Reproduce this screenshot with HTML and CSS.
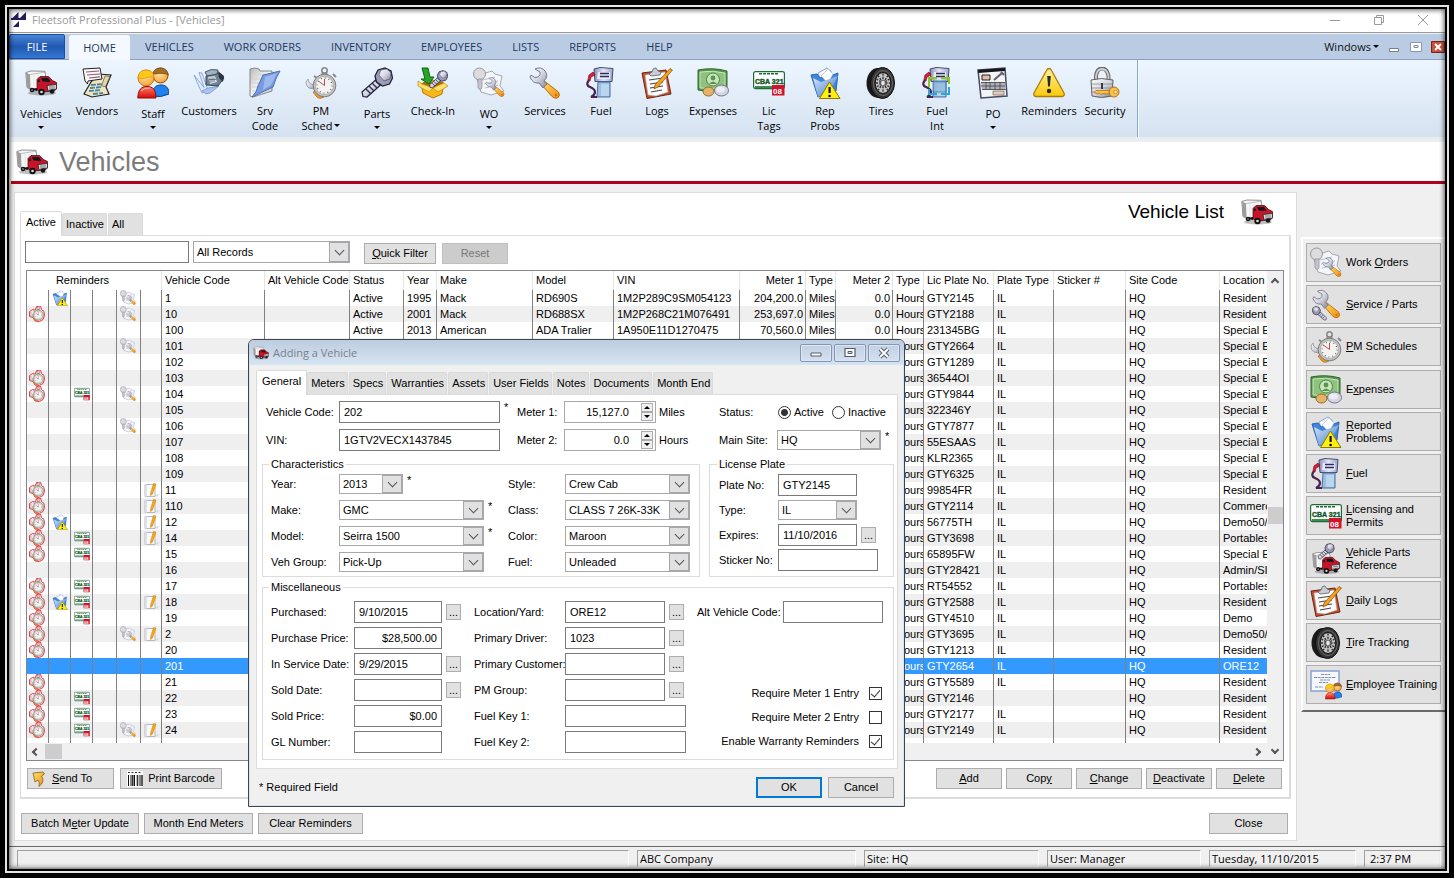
FILE: index.html
```html
<!DOCTYPE html>
<html lang="en">
<head>
<meta charset="utf-8">
<title>Fleetsoft Professional Plus - [Vehicles]</title>
<link rel="stylesheet" href="styles.css">
</head>
<body>
<svg class="sprite" aria-hidden="true">
  <defs>
    <linearGradient id="gSteel" x1="0" y1="0" x2="1" y2="1"><stop offset="0" stop-color="#fff"/><stop offset=".5" stop-color="#d5d7e2"/><stop offset="1" stop-color="#80839a"/></linearGradient>
    <linearGradient id="gGold" x1="0" y1="0" x2="1" y2="1"><stop offset="0" stop-color="#ffe066"/><stop offset="1" stop-color="#f08a10"/></linearGradient>
    <linearGradient id="gBlue" x1="0" y1="0" x2="1" y2="1"><stop offset="0" stop-color="#d8e8fb"/><stop offset="1" stop-color="#3a78c8"/></linearGradient>
    <linearGradient id="gRed" x1="0" y1="0" x2="0" y2="1"><stop offset="0" stop-color="#ff7a60"/><stop offset="1" stop-color="#d40d0d"/></linearGradient>
    <linearGradient id="gPump" x1="0" y1="0" x2="1" y2="0"><stop offset="0" stop-color="#8b93b8"/><stop offset=".5" stop-color="#e2e6f3"/><stop offset="1" stop-color="#9da6c8"/></linearGradient>
    <linearGradient id="gBox" x1="0" y1="0" x2="1" y2="1"><stop offset="0" stop-color="#fff"/><stop offset="1" stop-color="#bdbdbd"/></linearGradient>
    <linearGradient id="gDoc" x1="0" y1="0" x2="1" y2="1"><stop offset="0" stop-color="#b9b9b9"/><stop offset=".5" stop-color="#f4f4f4"/><stop offset="1" stop-color="#c9c9c9"/></linearGradient>
    <radialGradient id="gFace" cx=".4" cy=".3" r=".8"><stop offset="0" stop-color="#ffe9b0"/><stop offset="1" stop-color="#f59a2a"/></radialGradient>
    <linearGradient id="gSign" x1="0" y1="0" x2="0" y2="1"><stop offset="0" stop-color="#fff39a"/><stop offset="1" stop-color="#fbc80c"/></linearGradient>
  </defs>
  <symbol id="truck" viewBox="0 0 32 32">
    <ellipse cx="17" cy="26" rx="14" ry="2.500" fill="#000" opacity=".25"/>
    <path d="M.8 5.500 6 4l14 .3.500 3V20L9 24 2 20.500z" fill="#f6f6f6" stroke="#666" stroke-width=".7"/>
    <path d="M1 5.500 5 7.500 5.500 22.500 2 20.500z" fill="#9c9c9c"/><path d="M5 7.500 20 5.200" stroke="#999" stroke-width=".6"/><path d="M9 8v14M13 7.500v5M17 7v3" stroke="#dedede" stroke-width=".6"/>
    <path d="M12 12.500 15 9.500h8.500l4 4 4 2v6l-1.500 2L18 25l-6-2z" fill="#c81428" stroke="#3a0008" stroke-width=".7"/>
    <path d="M16 11h7l2.500 4-8-.5z" fill="#15151c"/><path d="m12.800 13.500 1.500-2 .9 3.500h-2.500z" fill="#222"/>
    <path d="M22 18.500 31.500 17.500v4.500L23 24z" fill="#d9d9dd" stroke="#222" stroke-width=".8"/><path d="M24 20h6M24 22h6" stroke="#555" stroke-width=".7"/>
    <path d="M5 22 12 21v3z" fill="#111"/>
    <circle cx="7" cy="23" r="2.300" fill="#111"/><circle cx="16.500" cy="25" r="3.200" fill="#111"/><circle cx="16.500" cy="25" r="1.300" fill="#ddd"/><circle cx="27" cy="24.500" r="2.300" fill="#161616"/><circle cx="7" cy="23" r=".8" fill="#bbb"/>
  </symbol>
  <symbol id="vendors" viewBox="0 0 32 32">
    <path d="m17 7 13 1-5 12 3 7-17 3-8-3 7-12z" fill="#efe3c0" stroke="#222" stroke-width="1.200"/>
    <path d="m24 9 5 .5-4.500 10-4-.5z" fill="#e7d7a6" stroke="#444" stroke-width=".6"/>
    <path d="m2 2 17-1 2 11-14 2-.5 3L4 14z" fill="#fbf7f3" stroke="#222"/>
    <path d="m5 5 13-1M6 8l13-1M8 11l11-1.200" stroke="#8a5a85" stroke-width="1.200"/>
    <path d="m10 18 12-1M9 21l12-1M8 24l12-1M12 27l10-1" stroke="#4a88a0" stroke-width="1.800" stroke-dasharray="5 1"/>
  </symbol>
  <symbol id="staff" viewBox="0 0 32 32">
    <path d="M15 29c0-7 3-11 9-11s8 4 8 9q-8 4-17 2z" fill="#1f82ee" stroke="#0a3f9c"/>
    <circle cx="23.500" cy="8.500" r="7.500" fill="url(#gFace)" stroke="#7a4a08"/><path d="M15.500 7Q17 1 23.500 1t8 7q-4-2-8.500-1.500T15.500 7z" fill="#a36d22" stroke="#6e450f" stroke-width=".6"/>
    <circle cx="9" cy="11" r="8" fill="url(#gFace)" stroke="#c87808"/><path d="M1 10.500Q2 3 9 3t8 7q-4-1-8 1t-8-.5z" fill="#ffc918" stroke="#d98c00" stroke-width=".6"/>
    <path d="M.800 31C1 23 4 19.500 10 19.500S19 23 19 31z" fill="url(#gRed)" stroke="#980808"/><path d="M4 24q3-3.500 9-3" stroke="#ffb8a8" fill="none"/>
  </symbol>
  <symbol id="customers" viewBox="0 0 32 32">
    <path d="M1 8q4 10 8 18l6-3L9 6l-3-.500 5 15z" fill="#dbe9ff" stroke="#7c9ad0" stroke-width=".8"/>
    <path d="m9 24 6-3 11-2-9 7-4 1z" fill="#a9c4ee" stroke="#6e8fc8" stroke-width=".7"/>
    <path d="m13 9 13-3 5 5-6 8-12-1z" fill="#6e8294" stroke="#232f3c" stroke-width=".8"/>
    <path d="M12 5q6-4 13-2l-1 4-10 2z" fill="#9fb0bf" stroke="#33404d" stroke-width=".8"/>
    <path d="m25 4 6 5-1 6-4-4z" fill="#2b3440"/><path d="m15 10 7-1 2 6-7 2z" fill="#d8e0e8"/><path d="M17 11v5M19 10.500v5M21 10.500v4.500M16 12.500h7" stroke="#4a5866" stroke-width=".7"/>
  </symbol>
  <symbol id="folder" viewBox="0 0 32 32">
    <path d="M1 2q5-2 9 0l1 2h12v20L4 30 1 29z" fill="url(#gDoc)" stroke="#888"/>
    <path d="M3 8h19M3 12h17M3 16h14M3 20h10M3 24h6" stroke="#d4d4d4" stroke-width="1.200"/>
    <path d="M14 8q9-2 17-4-4 6-7 16L3 30q5-5 6-11z" fill="#6f95e0" stroke="#3c63b8" opacity=".92"/><path d="m16 10 12-4-6 12-8 5z" fill="#b7cdf7" opacity=".6"/>
  </symbol>
  <symbol id="watch" viewBox="0 0 32 32">
    <path d="M3 12q0 4 3 5l6 1v4q-5 0-8-1-3-2-3-6z" fill="url(#gSteel)" stroke="#858585" stroke-width=".7"/><path d="m8 25 6-2 5 7q-5 3-8-1z" fill="#e89b2c" stroke="#a96608" stroke-width=".7"/>
    <circle cx="19.500" cy="3.500" r="2.700" fill="none" stroke="#8a8a8a" stroke-width="1.600"/><path d="M17 6h5v3h-5z" fill="#aaa" stroke="#666" stroke-width=".6"/><path d="m9 9 3 2M28 7l3 3" stroke="#888" stroke-width="2"/>
    <circle cx="19.500" cy="18.500" r="11.300" fill="#c3c3c3" stroke="#7b7b7b"/><circle cx="19.500" cy="18.500" r="9" fill="#f3f3f1" stroke="#9a9a9a" stroke-width=".6"/>
    <circle cx="19.500" cy="18.500" r="7.500" fill="none" stroke="#444" stroke-width="1.100" stroke-dasharray=".9 3.030"/><path d="M19.500 18.500V12m0 6.500L14 14.500" stroke="#c03a3a" stroke-width=".9"/>
  </symbol>
  <symbol id="bolt" viewBox="0 0 32 32">
    <path d="m18 10 5 5L6 30l-4-.5L1 25z" fill="url(#gSteel)" stroke="#24203c" stroke-width="1.200"/>
    <path d="m14 13 5 5M11 16l5 5M8 19l5 5M5 22l5 5" stroke="#33304f" stroke-width="1.400"/>
    <path d="m14 9 3-6 7-2 6 3 1.500 7-3 6-7 2-6-4z" fill="#9a9cb8" stroke="#24203c" stroke-width="1.300"/><path d="m18 8 2-5 6-1 4 4-1 6-6 2z" fill="url(#gSteel)" stroke="#4a4768" stroke-width=".6"/>
  </symbol>
  <symbol id="checkin" viewBox="0 0 32 32">
    <path d="m4 17 11-4 12 3-2 11-9 4-10-5z" fill="#f7b818" stroke="#b87808"/><path d="m4 17 12 4 11-5-6-3-6 2-5-2z" fill="#a86a06"/>
    <path d="m1 14 4 3 11 4-4 4-11-6zM27 16l4 3-10 6-5-4z" fill="#ffe06c" stroke="#c58a0a" stroke-width=".7"/>
    <path d="M5 1h6l2 9h4l-5 7-8-5h4z" fill="#28a428" stroke="#0d6a12"/>
    <use href="#bolt" x="12" y="3" width="19" height="19"/>
  </symbol>
  <symbol id="wrench" viewBox="0 0 32 32">
    <path d="M16 14.500 29.500 25q2.500 4-1 6-3.500 1-6-2L12 17z" fill="url(#gGold)" stroke="#c06c08"/>
    <path d="M6 2q6-3 10 2t-1 10q1 2 3 3l-4 4-4-5q-6 1-9-6l1-2q4 4 7 2t2-5z" fill="url(#gSteel)" stroke="#77798c"/><circle cx="27" cy="28" r="1.200" fill="#c27510"/>
  </symbol>
  <symbol id="wo" viewBox="0 0 32 32">
    <path d="M3 9 19 4l3 3 7 2-2 10 4 5-13 4-10-3z" fill="#f5f6fa" stroke="#a4a7b4"/><path d="m10 13 12-3M11 17l14-3M12 21l13-3" stroke="#b9bdd0"/>
    <circle cx="6.500" cy="7" r="6" fill="#dbdbe0" stroke="#999"/><path d="M5 12v9q2 3 4 0v-9z" fill="#c5c5cb" stroke="#8e8e98" stroke-width=".7"/>
    <use href="#wrench" x="12" y="10" width="20" height="20"/>
  </symbol>
  <symbol id="fuel" viewBox="0 0 32 32">
    <path d="m9 2 6-1.500 13 1-1 13H10z" fill="url(#gPump)" stroke="#454a78"/><path d="M13 5h12v7H12z" fill="#e6e9f6"/><path d="M15 6.500h9M15 9.500h9" stroke="#2e2d63" stroke-width="1.600"/>
    <path d="M13 15h12v15H12z" fill="#9cbfe0" stroke="#4b6da2"/><path d="M16 17h8v12h-8z" fill="#b8d6ee"/>
    <path d="M4 13q-4 5 1 7t5 5-4 5h6" fill="none" stroke="#4a2450" stroke-width="2.200"/><path d="M3 13 4 8l4-3 2 3-4 2-1 4z" fill="#d8203a" stroke="#7a0c1c" stroke-width=".7"/>
  </symbol>
  <symbol id="logs" viewBox="0 0 32 32">
    <path d="m1 6 24-3 5 24L6 31.500z" fill="#c4512c" stroke="#6e2410"/><path d="m4 8 20-3 3 20-12 4-8-1z" fill="#fbfbfb" stroke="#aaa" stroke-width=".6"/>
    <path d="m8 13 14-2M9 17l13-2M9 21l13-2M10 25l11-2" stroke="#484848" stroke-width="1.100"/><path d="m8 7 3-2q1-5 4-4l2 3 3 1-1 3-9 1z" fill="#c9ccd4" stroke="#60626c" stroke-width=".8"/>
    <path d="M29 1.500 31.500 3 17 20l-4 2 1-4z" fill="#f5a21c" stroke="#8a4c08" stroke-width=".7"/>
  </symbol>
  <symbol id="money" viewBox="0 0 32 32">
    <path d="M1 3q15-3 29 1v18q-15 4-29 1z" fill="#55964a" stroke="#2f6a2c"/><path d="M3 5q13-2 25 1v14q-13 3-25 1z" fill="#8fc27f" stroke="#dff0d4" stroke-width=".8"/>
    <circle cx="16" cy="12.500" r="6.500" fill="#c8e4bb" stroke="#4c8a42"/><circle cx="16" cy="11" r="2.400" fill="#5a964e"/><path d="M12 17q4-5 8 0z" fill="#5a964e"/>
    <ellipse cx="11.500" cy="24.500" rx="5.500" ry="4.500" fill="#e5b368" stroke="#94692a"/><ellipse cx="24.500" cy="23.500" rx="7" ry="5.500" fill="#d4d4e2" stroke="#77778e"/><ellipse cx="23.500" cy="22.500" rx="4.500" ry="3" fill="#ececf4"/>
  </symbol>
  <symbol id="plate" viewBox="0 0 32 32">
    <rect x=".6" y="4.600" width="30.800" height="17" rx="2" fill="#fff" stroke="#1d6a34" stroke-width="1.200"/><path d="M6 6.800h20" stroke="#1d6a34" stroke-width="1.400" stroke-dasharray="3 1"/><path d="M2 20h17" stroke="#3c8a52" stroke-width="2"/>
    <text x="2" y="16.500" font-family="Liberation Sans, sans-serif" font-weight="bold" font-size="7" fill="#14572a" stroke="#14572a" stroke-width=".4">CBA 321</text>
    <rect x="19" y="18" width="12.500" height="10.500" fill="#d0142c"/><text x="20" y="27" font-family="Liberation Sans, sans-serif" font-weight="bold" font-size="8" fill="#fff">08</text>
  </symbol>
  <symbol id="sign" viewBox="0 0 32 32">
    <path d="M16 1.500q1.500 0 2.500 2L31 26q1 3-2 3.500H3q-3-.5-2-3.500L13.500 3.500q1-2 2.500-2z" fill="url(#gSign)" stroke="#b07a06" stroke-width="1.300"/>
    <path d="M14.200 9h3.600l-.9 10.500h-1.800z" fill="#2a2a2a"/><circle cx="16" cy="24" r="2.200" fill="#2a2a2a"/>
  </symbol>
  <symbol id="problem" viewBox="0 0 32 32">
    <path d="m9 6 9-5 4 3 3 12-10 6z" fill="#f6faff" stroke="#8fa8cc"/><path d="M2 8l6-1 3 4 13-3 5-2-2 18-18 6z" fill="#3f87dc" stroke="#2a62b4"/><path d="m12 9 7-7 5 5-5 9z" fill="#fff" stroke="#a8bcd8" stroke-width=".6"/><path d="m4 11 8 4 17-6-9 17-11 4z" fill="url(#gBlue)"/>
    <path d="M20.500 15 31 31.500H10.500z" fill="#ffee10" stroke="#8a7a00"/><path d="M20.600 20v6" stroke="#111" stroke-width="2.200"/><circle cx="20.600" cy="29" r="1.300"/>
  </symbol>
  <symbol id="tire" viewBox="0 0 32 32">
    <ellipse cx="13" cy="16" rx="11.500" ry="15" fill="#191919"/><ellipse cx="17.500" cy="16" rx="12" ry="15.500" fill="#353535" stroke="#0d0d0d"/><ellipse cx="18" cy="16" rx="9.500" ry="12.500" fill="none" stroke="#777" stroke-width=".8"/>
    <ellipse cx="18" cy="16" rx="7.800" ry="10.500" fill="#c4c4c4" stroke="#111"/><path d="m18 6.500 0 19M11 16h14M13 8.500l10 15M23 8.500l-10 15M11.500 12l13 8M24.500 12l-13 8" stroke="#2b2b2b" stroke-width="1.400" stroke-dasharray="2 1.200"/><ellipse cx="18" cy="16" rx="2.400" ry="3" fill="#e5e5e5" stroke="#555"/>
  </symbol>
  <symbol id="fuelint" viewBox="0 0 32 32">
    <use href="#fuel" width="32" height="32"/><path d="M12 14h13v11H12z" fill="#8fb8d8" opacity=".7" stroke="#286ca8"/><path d="M8 20v-9h8M20 11h8v6" fill="none" stroke="#8ac81e" stroke-width="2"/><path d="M28 20v7h-8M16 27H8v-5" fill="none" stroke="#29a8d8" stroke-width="2"/>
  </symbol>
  <symbol id="po" viewBox="0 0 32 32">
    <path d="m1 3 27-2 2 28-26 2z" fill="#f4f4f7" stroke="#444a60" stroke-width="1.500"/><path d="m1 3 27-2v3L1 6z" fill="#15161e"/>
    <path d="M5 8h8v5H5z" fill="#e8bda8" stroke="#222"/><path d="m17 13 8-7M24 5l3 3" stroke="#5f6278" stroke-width="2.200"/><path d="M4 15h24v8H5z" fill="#adb0ba"/><path d="M4 15.500h24M4 19h24M5 22.500h24M9 15v8M13 15v8M18 15v8M23 15v8" stroke="#444" stroke-width=".8"/><path d="M16 24h11v4H16z" fill="#eac8b4" stroke="#555" stroke-width=".6"/>
  </symbol>
  <symbol id="lock" viewBox="0 0 32 32">
    <path d="M7 15V9q1-7.500 6-7.500T19.500 9v6" fill="none" stroke="#6c6c6c" stroke-width="4"/><path d="M7 15V9q1-7 6-7t6.500 7v6" fill="none" stroke="#cfcfcf" stroke-width="1.800"/>
    <path d="M2 13q10-3 22 0l-1 16q-11 3-20 0z" fill="url(#gSteel)" stroke="#5f5f5f"/><path d="M3 17h20M3 21h20M3 25h20" stroke="#8c8c8c" stroke-width=".8"/><path d="M13 16v6" stroke="#3b3b3b" stroke-width="2"/>
    <circle cx="25" cy="25" r="5" fill="#f8c14a" stroke="#b9700e"/><circle cx="26.500" cy="25" r="1.700" fill="#fff2cc" stroke="#b9700e" stroke-width=".7"/><path d="M20 23.500H7l-2 2 3 1.500 2-1 2 1.500 2-1 6 .5z" fill="#f8c14a" stroke="#b9700e" stroke-width=".8"/>
  </symbol>
  <symbol id="service" viewBox="0 0 32 32"><use href="#wrench" x="2" y="0" width="29" height="30"/><use href="#bolt" x="2" y="17" width="15" height="15" transform="matrix(-1 0 0 1 19 0)"/></symbol>
  <symbol id="vehparts" viewBox="0 0 32 32"><use href="#truck" y="6" width="32" height="28"/><use href="#bolt" x="5" y="0" width="22" height="17"/></symbol>
  <symbol id="training" viewBox="0 0 32 32">
    <rect x="1" y="2" width="28" height="20" fill="#f5f8ff" stroke="#8fa6d4" stroke-width="1.600"/><path d="M11 5.500h9M4 8.500h22M10 11h10M9 13.500h9M5 18h8" stroke="#7c8498" stroke-width=".9" stroke-dasharray="3 .6"/>
    <use href="#staff" x="15" y="13" width="17" height="18"/>
  </symbol>
  <symbol id="due" viewBox="0 0 32 32"><path d="m15 1 8-1 2 7 5 4 1 8-3 8-7 4-9-1-4-7-7-2V11l6-4 6 1z" fill="#f5e2e2" stroke="#f03a3a" stroke-width="2"/><use href="#watch" x="1" y="1" width="29" height="30"/></symbol>
  <symbol id="note" viewBox="0 0 32 32"><path d="m20 26 12-2-6 6z" fill="#ddd"/><path d="M2 5h20v24H2z" fill="#fafafc" stroke="#9ea4b8" stroke-width="1.500"/><path d="M2 5h4v24H2z" fill="#dcdfea"/><path d="m19 3 5 1-7 20-4 3v-5z" fill="#f6a818" stroke="#c87c08"/></symbol>
  <symbol id="send" viewBox="0 0 16 16"><path d="m1 2 10-1 1.500 2L9.500 5q4 5.500-2.500 10.500Q8 11 6 9l-3 2z" fill="url(#gGold)" stroke="#705010" stroke-width=".7"/></symbol>
  <symbol id="barcode" viewBox="0 0 16 16"><path d="M0 0h16v16H0z" fill="#fff"/><path d="M1 1.500h14" stroke="#333" stroke-dasharray="2 1.500"/><path d="M1.500 4v11M4 4v11M7.500 4v11M13 4v11" stroke="#111"/><path d="M5.800 4v11M10.500 4v11M15 4v11" stroke="#333" stroke-width="1.600"/></symbol>
</svg>

<div class="window">
  <header class="titlebar">
    <svg class="logo" viewBox="0 0 16 16"><path d="M7.500 0v6H1.500zM15 0v6H9z" fill="#251a5c"/><path d="M0 6h15v2H0zM8 9v6H2z" fill="#251a5c"/></svg>
    <span class="app-title">Fleetsoft Professional Plus - [Vehicles]</span>
    <button class="win-btn" aria-label="Minimize"><svg viewBox="0 0 12 12"><path d="M1 6.500h10"/></svg></button>
    <button class="win-btn" aria-label="Restore"><svg viewBox="0 0 12 12"><path d="M1.500 3.500h7v7h-7zM3.500 3V1.500h7v7H9"/></svg></button>
    <button class="win-btn" aria-label="Close"><svg viewBox="0 0 12 12"><path d="m1 1 10 10M11 1 1 11"/></svg></button>
  </header>

  <nav class="menu">
    <button class="file">FILE</button>
    <button class="tab-home">HOME</button>
    <button>VEHICLES</button><button>WORK ORDERS</button><button>INVENTORY</button><button>EMPLOYEES</button><button>LISTS</button><button>REPORTS</button><button>HELP</button>
    <div class="mdi">
      <button class="windows">Windows<i class="arrow"></i></button>
      <button class="mdi-btn" aria-label="Minimize child"><svg viewBox="0 0 14 14"><path d="M2.500 8.500h9v3h-9z" fill="#fff" stroke="#777f8c"/></svg></button>
      <button class="mdi-btn" aria-label="Restore child"><svg viewBox="0 0 14 14"><path d="M1.500 2.500h11v9h-11z" fill="#fff" stroke="#8b98aa"/><path d="M5 5.500h4v2H5z" fill="#fff" stroke="#7f8da5"/></svg></button>
      <button class="mdi-btn" aria-label="Close child"><svg viewBox="0 0 14 14"><path d="M.500 1.500h13v11H.500z" fill="#c8503c" stroke="#7a2216"/><path d="m4 4 6 6m0-6-6 6" stroke="#fff" stroke-width="2"/></svg></button>
    </div>
  </nav>

  <div class="ribbon"><div class="ribbon-group" id="ribbon"></div></div>

  <div class="page-head"><svg><use href="#truck"/></svg><h1>Vehicles</h1></div>

  <main class="workspace">
    <section class="panel">
      <div class="panel-head">
        <div class="tabs">
          <button class="active">Active</button><button>Inactive</button><button class="all">All</button>
        </div>
        <h2>Vehicle List <svg><use href="#truck"/></svg></h2>
      </div>
      <div class="list">
        <div class="filters">
          <input class="box search" type="text" aria-label="Search">
          <span class="combo filter"><select aria-label="Filter"><option>All Records</option></select></span>
          <button class="btn quick"><span><u>Q</u>uick Filter</span></button>
          <button class="btn reset" disabled>Reset</button>
        </div>
        <div class="grid">
          <div class="grid-view">
            <table>
              <colgroup><col class="w22"><col class="w22"><col class="w22"><col class="w24"><col class="w24"><col class="w21"><col class="w103"><col class="w85"><col class="w54"><col class="w33"><col class="w96"><col class="w81"><col class="w126"><col class="w66"><col class="w30"><col class="w57"><col class="w31"><col class="w70"><col class="w60"><col class="w72"><col class="w94"><col></colgroup>
              <thead><tr><th colspan="5" class="center">Reminders</th><th></th><th>Vehicle Code</th><th>Alt Vehicle Code</th><th>Status</th><th>Year</th><th>Make</th><th>Model</th><th>VIN</th><th class="num">Meter 1</th><th>Type</th><th class="num">Meter 2</th><th>Type</th><th>Lic Plate No.</th><th>Plate Type</th><th>Sticker #</th><th>Site Code</th><th>Location</th></tr></thead>
              <tbody id="rows"></tbody>
            </table>
            <div class="hscroll"><i class="chev left"></i><i class="thumb"></i><i class="chev right"></i></div>
          </div>
          <div class="vscroll"><i class="chev up"></i><i class="thumb"></i><i class="chev down"></i></div>
        </div>
        <div class="actions">
          <button class="btn send"><svg><use href="#send"/></svg><span><u>S</u>end To</span></button>
          <button class="btn print"><svg><use href="#barcode"/></svg>Print Barcode</button>
          <span class="spring"></span>
          <button class="btn act"><span><u>A</u>dd</span></button>
          <button class="btn act"><span>Cop<u>y</u></span></button>
          <button class="btn act"><span><u>C</u>hange</span></button>
          <button class="btn act"><span><u>D</u>eactivate</span></button>
          <button class="btn act"><span><u>D</u>elete</span></button>
        </div>
      </div>
      <div class="panel-foot">
        <button class="btn batch"><span>Batch M<u>e</u>ter Update</span></button>
        <button class="btn month">Month End Meters</button>
        <button class="btn clear">Clear Reminders</button>
        <span class="spring"></span>
        <button class="btn close">Close</button>
      </div>
    </section>
    <aside class="side" id="side"></aside>
  </main>

  <footer class="status">
    <span class="s-main"></span><span class="s-company">ABC Company</span><span class="s-site">Site: HQ</span><span class="s-user">User: Manager</span><span class="s-date">Tuesday, 11/10/2015</span><span class="s-time">2:37 PM</span>
  </footer>
</div>

<div class="dialog" role="dialog" aria-labelledby="dlg-title">
  <div class="dlg-title">
    <svg class="dlg-icon"><use href="#truck"/></svg><span id="dlg-title">Adding a Vehicle</span>
    <button aria-label="Minimize dialog"><svg viewBox="0 0 16 12"><path d="M3 6h10v3H3z" fill="#fff" stroke="#555b6c"/></svg></button>
    <button aria-label="Maximize dialog"><svg viewBox="0 0 16 12"><path d="M3 1.500h10v8H3z" fill="#fff" stroke="#555b6c" stroke-width="1.200"/><path d="M6 4.500h4v2H6z" fill="#cbd8ea" stroke="#555b6c"/></svg></button>
    <button aria-label="Close dialog"><svg viewBox="0 0 16 12"><path d="m4 2 8 8m0-8-8 8" stroke="#555b6c" stroke-width="4"/><path d="m4 2 8 8m0-8-8 8" stroke="#fff" stroke-width="2"/></svg></button>
  </div>
  <form class="dlg-body">
    <div class="tabs dlg-tabs">
      <button type="button" class="active">General</button><button type="button">Meters</button><button type="button">Specs</button><button type="button">Warranties</button><button type="button">Assets</button><button type="button">User Fields</button><button type="button">Notes</button><button type="button">Documents</button><button type="button">Month End</button>
    </div>
    <div class="dlg-page">
      <div class="top-form">
        <label for="code">Vehicle Code:</label><input id="code" class="box" value="202"><span class="star">*</span>
        <label for="m1">Meter 1:</label><span class="meter"><input id="m1" value="15,127.0"><span class="spin"><button type="button" aria-label="Meter 1 up"><i class="up"></i></button><button type="button" aria-label="Meter 1 down"><i></i></button></span></span><span class="unit">Miles</span>
        <span>Status:</span><span class="radios"><label><input type="radio" name="st" checked>Active</label><label><input type="radio" name="st">Inactive</label></span>
        <label for="vin">VIN:</label><input id="vin" class="box" value="1GTV2VECX1437845"><span></span>
        <label for="m2">Meter 2:</label><span class="meter"><input id="m2" value="0.0"><span class="spin"><button type="button" aria-label="Meter 2 up"><i class="up"></i></button><button type="button" aria-label="Meter 2 down"><i></i></button></span></span><span class="unit">Hours</span>
        <label for="site">Main Site:</label><span class="field"><span class="combo site"><select id="site"><option>HQ</option></select></span><span class="star">*</span></span>
      </div>
      <div class="groups">
        <fieldset class="chars"><legend>Characteristics</legend>
          <label for="year">Year:</label><span class="field"><span class="combo year"><select id="year"><option>2013</option></select></span><span class="star">*</span></span>
          <label for="style">Style:</label><span class="combo"><select id="style"><option>Crew Cab</option></select></span>
          <label for="make">Make:</label><span class="field"><span class="combo make"><select id="make"><option>GMC</option></select></span><span class="star">*</span></span>
          <label for="class">Class:</label><span class="combo"><select id="class"><option>CLASS 7 26K-33K</option></select></span>
          <label for="model">Model:</label><span class="field"><span class="combo make"><select id="model"><option>Seirra 1500</option></select></span><span class="star">*</span></span>
          <label for="color">Color:</label><span class="combo"><select id="color"><option>Maroon</option></select></span>
          <label for="vg">Veh Group:</label><span class="field"><span class="combo make"><select id="vg"><option>Pick-Up</option></select></span></span>
          <label for="fu">Fuel:</label><span class="combo"><select id="fu"><option>Unleaded</option></select></span>
        </fieldset>
        <fieldset class="plate"><legend>License Plate</legend>
          <label for="pn">Plate No:</label><span class="field"><input id="pn" class="box w79" value="GTY2145"></span>
          <label for="pt">Type:</label><span class="field"><span class="combo w79"><select id="pt"><option>IL</option></select></span></span>
          <label for="ex">Expires:</label><span class="field"><input id="ex" class="box w79" value="11/10/2016"><button type="button" class="more" aria-label="Pick expiry date">...</button></span>
          <label for="sn">Sticker No:</label><span class="field"><input id="sn" class="box w100"></span>
        </fieldset>
      </div>
      <fieldset class="misc"><legend>Miscellaneous</legend>
        <div class="misc-body">
          <div class="misc-grid">
            <label for="pu">Purchased:</label><span class="field"><input id="pu" class="box w88" value="9/10/2015"><button type="button" class="more" aria-label="Pick purchase date">...</button></span>
            <label for="lo">Location/Yard:</label><span class="field"><input id="lo" class="box w100" value="ORE12"><button type="button" class="more" aria-label="Pick location">...</button></span>
            <label for="pp">Purchase Price:</label><span class="field"><input id="pp" class="box w88 money" value="$28,500.00"></span>
            <label for="pd">Primary Driver:</label><span class="field"><input id="pd" class="box w100" value="1023"><button type="button" class="more" aria-label="Pick driver">...</button></span>
            <label for="is">In Service Date:</label><span class="field"><input id="is" class="box w88" value="9/29/2015"><button type="button" class="more" aria-label="Pick service date">...</button></span>
            <label for="pc">Primary Customer:</label><span class="field"><input id="pc" class="box w100"><button type="button" class="more" aria-label="Pick customer">...</button></span>
            <label for="sd">Sold Date:</label><span class="field"><input id="sd" class="box w88"><button type="button" class="more" aria-label="Pick sold date">...</button></span>
            <label for="pg">PM Group:</label><span class="field"><input id="pg" class="box w100"><button type="button" class="more" aria-label="Pick PM group">...</button></span>
            <label for="sp">Sold Price:</label><span class="field"><input id="sp" class="box w88 money" value="$0.00"></span>
            <label for="f1">Fuel Key 1:</label><span class="field"><input id="f1" class="box w121"></span>
            <label for="gl">GL Number:</label><span class="field"><input id="gl" class="box w88"></span>
            <label for="f2">Fuel Key 2:</label><span class="field"><input id="f2" class="box w121"></span>
          </div>
          <div class="misc-side">
            <div class="alt"><label for="al">Alt Vehicle Code:</label><input id="al" class="box w100"></div>
            <label class="check first">Require Meter 1 Entry<input type="checkbox" checked></label>
            <label class="check">Require Meter 2 Entry<input type="checkbox"></label>
            <label class="check">Enable Warranty Reminders<input type="checkbox" checked></label>
          </div>
        </div>
      </fieldset>
    </div>
    <div class="dlg-foot"><span>* Required Field</span><span class="spring"></span><button type="button" class="btn act ok">OK</button><button type="button" class="btn act">Cancel</button></div>
  </form>
</div>
<script src="app.js"></script>
</body>
</html>
```
FILE: styles.css
```css
* { box-sizing: border-box; }
body { margin: 0; min-height: 100vh; padding: 5px; background: #000; color: #000; font: 11px/13px "Liberation Sans", Arial, sans-serif; display: flex; }
button, input, select { font: inherit; color: inherit; margin: 0; padding: 0; border: 0; background: none; border-radius: 0; outline: 0; }
h1, h2 { margin: 0; font-weight: normal; }
u { text-underline-offset: 1px; }
.sprite { position: absolute; width: 0; height: 0; }
.spring { flex: 1; }

.window { flex: 1; min-width: 0; display: flex; flex-direction: column; border: 2px solid #e4e4e4; outline: 2px solid #000; outline-offset: -4px; padding: 2px; background: #f0f0f0; position: relative; }
.window::after { content: ""; position: absolute; inset: 2px; pointer-events: none; box-shadow: inset 0 0 5px 1px rgba(0,0,0,.65); }

.titlebar { height: 24px; background: #fff; border-bottom: 1px solid #999; display: flex; align-items: center; padding: 0 0 1px 2px; font: 11px/16px "Open Sans", sans-serif; color: #999; }
.logo { width: 16px; height: 16px; }
.app-title { flex: 1; margin-left: 5px; }
.win-btn { width: 44px; height: 20px; }
.win-btn svg { width: 12px; height: 12px; fill: none; stroke: #999; display: block; margin: 0 auto; }

.menu { margin-top: 1px; height: 26px; background: #bacce4; border-bottom: 1px solid #8ba0c4; display: flex; font: 11px/15px "Open Sans", sans-serif; color: #1e395b; }
.menu > button { padding: 0 15px; }
.menu > .file { width: 56px; padding: 0; margin-right: 4px; color: #fff; background: linear-gradient(#4a86d8, #2159b0 50%, #3577d2); border: 1px solid #1c4f9f; border-radius: 2px 2px 0 0; }
.menu > .tab-home { width: 61px; padding: 0; background: #f4f9ff; border-radius: 3px 3px 0 0; margin-bottom: -1px; margin-top: 1px; }
.mdi { margin-left: auto; display: flex; align-items: center; gap: 8px; color: #111; }
.mdi-btn { width: 14px; height: 14px; }
.mdi-btn svg { width: 14px; height: 14px; display: block; fill: none; }
.arrow { display: inline-block; border: 3px solid transparent; border-top-color: #000; border-bottom: 0; margin-left: 2px; vertical-align: 3px; }

.ribbon { height: 82px; background: linear-gradient(#edf6ff, #d6e2f1 76px); border-bottom: 5px solid #c0dbf8; border-image: linear-gradient(#8ba0c0, #a9c0de 30%, #c2dcfb 60%, #eee) 5; display: flex; padding-left: 4px; }
.ribbon-group { display: flex; border-right: 1px solid #8fa6cb; box-shadow: 1px 0 #f4f9ff; padding-right: 4px; }
.tool { width: 56px; padding-top: 7px; display: flex; flex-direction: column; align-items: center; font: 11px/15px "Open Sans", sans-serif; white-space: nowrap; }
.tool svg { width: 32px; height: 32px; flex: none; }
.tool span { margin-top: 4px; }
.tool.drop span { margin-top: 7px; }
.tool.drop > .arrow { margin: 5px 0 0; }

.page-head { height: 42px; background: #fff; border-bottom: 3px solid #b00218; display: flex; align-items: center; margin-left: 2px; padding-left: 5px; gap: 11px; }
.page-head svg { width: 32px; height: 32px; }
.page-head h1 { font-size: 27px; line-height: 32px; color: #7c7c7c; }

.workspace { flex: 1; display: flex; padding: 8px 0 5px 5px; align-items: stretch; }
.panel { flex: 1; min-width: 0; background: #fff; border: 1px solid #dcdcdc; padding: 0 5px 6px; display: flex; flex-direction: column; }
.panel-head { display: flex; align-items: flex-end; justify-content: space-between; height: 42px; }
.panel-head h2 { font-size: 19px; line-height: 38px; height: 42px; display: flex; gap: 17px; padding-right: 18px; }
.panel-head h2 svg { width: 32px; height: 32px; margin-top: 3px; }
.tabs { display: flex; align-items: flex-end; position: relative; height: 25px; margin-bottom: -1px; }
.tabs button { height: 22px; padding: 0 2px 0 3px; margin-bottom: 1px; background: #e1e1e1; border: 1px solid #dadada; border-bottom: 0; border-radius: 2px 2px 0 0; margin-right: 1px; white-space: nowrap; }
.tabs .active { height: 25px; background: #fff; margin: 0; padding: 0 5px 3px; }
.tabs .all { width: 35px; text-align: left; padding-left: 3px; }
.list { flex: 1; display: flex; flex-direction: column; border: 1px solid #dcdcdc; border-right-width: 2px; border-bottom-width: 2px; padding: 5px 5px 7px; }
.filters { display: flex; height: 23px; margin-left: -1px; }
.box { height: 22px; border: 1px solid #7a7a7a; background: #fff; padding: 0 4px; min-width: 0; }
.search { width: 164px; margin-right: 4px; }
.combo { position: relative; display: block; height: 20px; border: 1px solid #a8a8ac; background: #fff; }
.combo select { width: 100%; height: 100%; appearance: none; padding-left: 3px; display: block; }
.combo::before { content: ""; position: absolute; right: 0; top: 0; bottom: 0; width: 18px; background: #e1e1e1; border: 1px solid #a8a8ac; pointer-events: none; }
.combo::after { content: ""; position: absolute; right: 6px; top: 50%; width: 6px; height: 6px; margin-top: -5px; border: solid #555; border-width: 0 1px 1px 0; transform: rotate(45deg); pointer-events: none; }
.combo.filter { width: 157px; height: 22px; }
.btn { height: 21px; background: #e1e1e1; border: 1px solid #adadad; white-space: nowrap; display: flex; align-items: center; justify-content: center; }
.quick { width: 72px; margin: 2px 6px 0 14px; }
.reset { width: 66px; margin-top: 2px; background: #ccc; border-color: #bfbfbf; color: #777; }

.grid { flex: 1; margin-top: 6px; border: 1px solid #828790; display: flex; background: #fff; min-height: 0; }
.grid-view { flex: 1; min-width: 0; display: flex; flex-direction: column; overflow: hidden; }
table { width: 100%; table-layout: fixed; border-collapse: separate; border-spacing: 0; }
th, td { font-weight: normal; text-align: left; padding: 0 0 0 3px; overflow: hidden; white-space: nowrap; line-height: 16px; }
th { height: 19px; border-right: 1px solid #e5e5e5; padding-bottom: 1px; }
td { height: 16px; border-right: 1px solid #808080; }
th:last-child, td:last-child { border-right: 0; }
.center { text-align: center; border: 0; padding-right: 6px; }
.num { text-align: right; padding-right: 2px; }
td.ico { padding: 0 0 0 2px; }
td.ico svg { width: 16px; height: 16px; display: block; }
td.ico + td.ico svg { margin-left: 1px; }
tbody tr:nth-child(even) { background: #efefef; }
tbody tr.sel { background: #39f; color: #fff; }
tbody tr.fill { background: #fff; }
.fill td { height: 5px; line-height: 5px; }
.w22 { width: 22px; } .w24 { width: 24px; } .w21 { width: 21px; } .w103 { width: 103px; } .w85 { width: 85px; } .w54 { width: 54px; } .w33 { width: 33px; } .w96 { width: 96px; } .w81 { width: 81px; } .w126 { width: 126px; } .w66 { width: 66px; } .w30 { width: 30px; } .w57 { width: 57px; } .w31 { width: 31px; } .w70 { width: 70px; } .w60 { width: 60px; } .w72 { width: 72px; } .w94 { width: 94px; }
.hscroll { margin-top: auto; height: 17px; background: #f0f0f0; display: flex; align-items: center; }
.hscroll .thumb { width: 17px; height: 15px; background: #cdcdcd; margin-left: 6px; margin-right: auto; }
.vscroll { width: 16px; background: #f0f0f0; display: flex; flex-direction: column; align-items: center; }
.vscroll .thumb { width: 15px; height: 17px; background: #cdcdcd; margin: 222px 0 auto; }
.chev { width: 6px; height: 6px; border: solid #555; border-width: 2px 2px 0 0; flex: none; }
.chev.left { transform: rotate(-135deg); margin-left: 6px; }
.chev.right { transform: rotate(45deg); margin-right: 7px; }
.chev.up { transform: rotate(-45deg); margin-top: 8px; }
.chev.down { transform: rotate(135deg); margin-bottom: 7px; }

.actions { display: flex; margin-top: 7px; gap: 4px; padding: 0 2px 1px 1px; }
.btn svg { width: 16px; height: 16px; }
.act { width: 66px; }
.send { width: 87px; justify-content: flex-start; padding-left: 4px; gap: 4px; margin-right: 2px; }
.print { width: 102px; gap: 5px; }
.panel-foot { display: flex; gap: 5px; margin: 14px 3px 0 1px; }
.batch { width: 118px; } .month { width: 109px; } .clear { width: 105px; } .close { width: 79px; }

.side { width: 144px; margin: 45px 0 0 4px; align-self: flex-start; border: 1px solid #fff; border-width: 2px 0 2px 2px; border-bottom-color: #696969; padding: 4px 4px 6px 3px; display: flex; flex-direction: column; gap: 3px; }
.side button { height: 39px; display: flex; align-items: center; gap: 4px; padding-left: 3px; background: #e1e1e1; border: 1px solid #adadad; text-align: left; white-space: nowrap; }
.side button:nth-child(4n) { margin-top: 1px; }
.side svg { width: 32px; height: 32px; flex: none; }

.status { height: 23px; border-top: 1px solid #696969; display: flex; gap: 8px; padding: 3px 4px 2px 8px; font: 11px/17px "Open Sans", sans-serif; }
.status span { border: 1px solid #a0a0a0; border-right-color: #fff; border-bottom-color: #fff; padding-left: 2px; line-height: 16px; white-space: nowrap; }
.s-main { flex: 1; } .s-company { width: 219px; } .s-site { width: 175px; } .s-user { width: 154px; } .s-date { width: 147px; } .status .s-time { width: 77px; padding-left: 5px; }

.dialog { position: absolute; left: 248px; top: 339px; width: 657px; border: 1px solid #40444c; border-radius: 6px 6px 0 0; background: #f0f0f0; overflow: hidden; box-shadow: inset 1px -1px #d7e4f2, inset -1px 0 #d7e4f2; }
.dlg-title { height: 25px; background: linear-gradient(#bccde0, #d7e4f2); display: flex; align-items: center; gap: 2px; padding: 0 4px; font: 11px/16px "Open Sans", sans-serif; color: #77808c; }
.dlg-title span { flex: 1; margin-left: 2px; }
.dlg-icon { width: 16px; height: 16px; }
.dlg-title button { width: 32px; height: 18px; border: 1px solid #8795b5; border-radius: 2px; box-shadow: inset 0 0 0 1px #dae6f4; }
.dlg-title button svg { width: 16px; height: 12px; display: block; margin: 0 auto; fill: none; }
.dlg-body { padding: 5px 6px 0 7px; }
.dlg-page { background: #fff; border: 1px solid #dcdcdc; padding: 6px 3px 8px 5px; }
.top-form { display: grid; grid-template-columns: 73px 161px 17px 47px 92px 63px 58px 1fr; grid-auto-rows: 22px; row-gap: 6px; align-items: center; padding-left: 4px; }
.star { align-self: flex-start; padding-left: 4px; }
.meter { display: flex; height: 22px; border: 1px solid #a8a8ac; }
.meter input { width: 76px; text-align: right; padding-right: 12px; }
.spin { display: flex; flex-direction: column; width: 12px; margin: 1px 0; }
.spin button { flex: 1; border: 1px solid #adadad; background: #f0f0f0; display: flex; align-items: center; justify-content: center; }
.spin i { border: 3px solid transparent; border-top-color: #000; border-bottom: 0; }
.spin i.up { border-top: 0; border-bottom: 3px solid #000; }
.unit { padding-left: 3px; }
.radios { display: flex; gap: 7px; }
.radios label { display: flex; align-items: center; gap: 3px; }
.radios input { appearance: none; width: 13px; height: 13px; border: 1px solid #333; border-radius: 50%; background: #fff; margin-left: 1px; }
.radios input:checked { background: radial-gradient(#333 0 3px, #fff 4px); }
.field { display: flex; align-items: center; }
.site { width: 104px; }
fieldset { margin: 0; min-width: 0; border: 1px solid #dcdcdc; padding: 3px 8px 4px; }
legend { padding: 0 2px; margin-left: -2px; height: 14px; line-height: 14px; }
.groups { display: grid; grid-template-columns: 438px 1fr; gap: 9px; margin-top: 6px; }
.chars { display: grid; grid-template-columns: 68px 169px 57px 125px; grid-auto-rows: 20px; row-gap: 6px; align-items: center; }
.year { width: 64px; } .make { width: 145px; }
.plate { display: grid; grid-template-columns: 59px 1fr; grid-auto-rows: 22px; row-gap: 3px; align-items: center; padding-left: 9px; }
.plate .field { height: 22px; }
.w79 { width: 79px; } .w88 { width: 88px; } .w100 { width: 100px; } .w121 { width: 121px; }
.money { text-align: right; }
.more { width: 15px; height: 16px; margin-left: 4px; background: #e1e1e1; border: 1px solid #adadad; line-height: 12px; }
.misc { margin-top: 3px; padding: 7px 8px 6px; }
.misc-body { display: flex; }
.misc-grid { display: grid; grid-template-columns: 83px 120px 91px 132px; grid-auto-rows: 22px; row-gap: 4px; align-items: center; white-space: nowrap; }
.misc-side { width: 186px; display: flex; flex-direction: column; }
.alt { display: flex; align-items: center; justify-content: space-between; white-space: nowrap; }
.check { display: flex; align-items: center; justify-content: flex-end; gap: 10px; height: 24px; padding-right: 1px; }
.check.first { margin-top: auto; }
.check input { appearance: none; width: 13px; height: 13px; border: 1px solid #333; background: #fff; display: flex; justify-content: center; }
.check input:checked::after { content: ""; width: 4px; height: 8px; border: solid #333; border-width: 0 1px 1px 0; transform: rotate(40deg); }
.dlg-foot { display: flex; padding: 8px 4px 8px 3px; gap: 6px; align-items: center; }
.ok { border: 2px solid #0078d7; }
```
FILE: app.js
```javascript
const icon = id => `<svg aria-hidden="true"><use href="#${id}"/></svg>`;

// [icon, label, opens a menu]
const tools = [
  ["truck", "Vehicles", 1], ["vendors", "Vendors"], ["staff", "Staff", 1], ["customers", "Customers"],
  ["folder", "Srv<br>Code"], ["watch", "PM<br>Sched<i class='arrow'></i>"], ["bolt", "Parts", 1], ["checkin", "Check-In"],
  ["wo", "WO", 1], ["wrench", "Services"], ["fuel", "Fuel"], ["logs", "Logs"], ["money", "Expenses"],
  ["plate", "Lic<br>Tags"], ["problem", "Rep<br>Probs"], ["tire", "Tires"], ["fuelint", "Fuel<br>Int"],
  ["po", "PO", 1], ["sign", "Reminders"], ["lock", "Security"]
];
document.getElementById("ribbon").innerHTML = tools.map(([i, t, d]) =>
  `<button class="tool${d ? " drop" : ""}">${icon(i)}<span>${t}</span>${d ? "<i class='arrow'></i>" : ""}</button>`).join("");

const side = [
  ["wo", "Work <u>O</u>rders"], ["service", "<u>S</u>ervice / Parts"], ["watch", "<u>P</u>M Schedules"],
  ["money", "E<u>x</u>penses"], ["problem", "<u>R</u>eported<br>Problems"], ["fuel", "<u>F</u>uel"],
  ["plate", "<u>L</u>icensing and<br>Permits"], ["vehparts", "<u>V</u>ehicle Parts<br>Reference"],
  ["logs", "<u>D</u>aily Logs"], ["tire", "<u>T</u>ire Tracking"], ["training", "<u>E</u>mployee Training"]
];
document.getElementById("side").innerHTML = side.map(([i, t]) => `<button>${icon(i)}<span>${t}</span></button>`).join("");

// reminder flags: c = PM due, f = reported problem, p = plate, w = work order, n = note
const flags = [["c", "due"], ["f", "problem"], ["p", "plate"], ["", ""], ["w", "wo"], ["n", "note"]];
const data = [
  ["fw", "1", "GTY2145", "Resident", ["Active", "1995", "Mack", "RD690S", "1M2P289C9SM054123", "204,200.0", "Miles", "0.0"]],
  ["cw", "10", "GTY2188", "Resident", ["Active", "2001", "Mack", "RD688SX", "1M2P268C21M076491", "253,697.0", "Miles", "0.0"]],
  ["", "100", "231345BG", "Special E", ["Active", "2013", "American", "ADA Tralier", "1A950E11D1270475", "70,560.0", "Miles", "0.0"]],
  ["w", "101", "GTY2664", "Special E"], ["", "102", "GTY1289", "Special E"], ["c", "103", "36544OI", "Special E"],
  ["cpw", "104", "GTY9844", "Special E"], ["", "105", "322346Y", "Special E"], ["w", "106", "GTY7877", "Special E"],
  ["", "107", "55ESAAS", "Special E"], ["", "108", "KLR2365", "Special E"], ["", "109", "GTY6325", "Special E"],
  ["cn", "11", "99854FR", "Resident"], ["cn", "110", "GTY2114", "Commerc"], ["cfn", "12", "56775TH", "Demo50/"],
  ["cpn", "14", "GTY3698", "Portables"], ["cp", "15", "65895FW", "Special E"], ["", "16", "GTY28421", "Admin/SI"],
  ["cp", "17", "RT54552", "Portables"], ["cfpn", "18", "GTY2588", "Resident"], ["cp", "19", "GTY4510", "Demo"],
  ["cwn", "2", "GTY3695", "Demo50/"], ["c", "20", "GTY1213", "Resident"], ["", "201", "GTY2654", "ORE12"],
  ["c", "21", "GTY5589", "Resident"], ["cp", "22", "GTY2146", "Resident"], ["cp", "23", "GTY2177", "Resident"],
  ["cpwn", "24", "GTY2149", "Resident"]
];
const blank = Array(8).fill("");
const numeric = [5, 7];
const cell = (t, c) => `<td${c ? ` class="${c}"` : ""}>${t}</td>`;
document.getElementById("rows").innerHTML = data.map(([f, code, plate, loc, v = blank]) =>
  `<tr${code === "201" ? ' class="sel"' : ""}>` +
  flags.map(([k, i]) => cell(k && f.includes(k) ? icon(i) : "", "ico")).join("") +
  cell(code) + cell("") + v.map((t, n) => cell(t, numeric.includes(n) ? "num" : "")).join("") +
  cell("Hours") + cell(plate) + cell(code === "22" ? "" : "IL") + cell("") +
  cell("HQ") + cell(loc) + "</tr>").join("") + `<tr class="fill">${"<td></td>".repeat(22)}</tr>`;
```
